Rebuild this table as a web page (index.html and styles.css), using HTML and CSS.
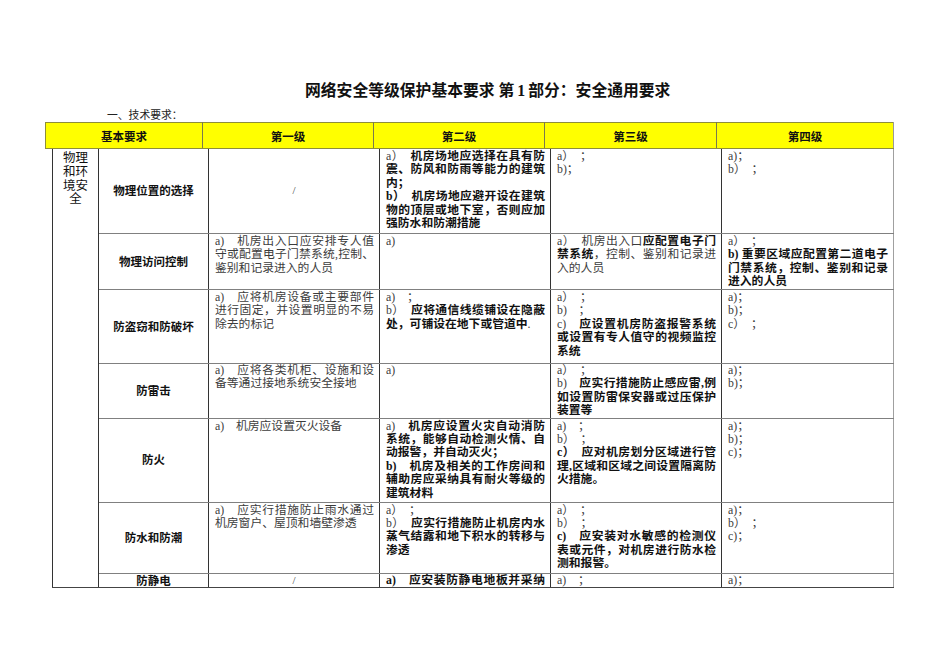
FILE: index.html
```html
<!DOCTYPE html>
<html lang="zh-CN">
<head>
<meta charset="utf-8">
<title>网络安全等级保护基本要求</title>
<link rel="stylesheet" href="styles.css">
</head>
<body>
<div class="page">
  <h1 class="title">网络安全等级保护基本要求 第<span class="num">1</span>部分：安全通用要求</h1>
  <p class="sub">一、技术要求：</p>

  <table class="head">
    <colgroup><col class="h1"><col class="h2"><col class="h3"><col class="h4"><col class="h5"></colgroup>
    <tr><th>基本要求</th><th>第一级</th><th>第二级</th><th>第三级</th><th>第四级</th></tr>
  </table>

  <table class="body">
    <colgroup><col class="b1"><col class="b2"><col class="b3"><col class="b4"><col class="b5"><col class="b6"></colgroup>
    <tr class="r1">
      <td class="cat" rowspan="7"><span class="cl">物理</span><span class="cl">和环</span><span class="cl">境安</span><span class="cl">全</span></td>
      <td class="lab">物理位置的选择</td>
      <td class="slash">/</td>
      <td class="c">
        <span class="l j"><span class="r">a）</span><span class="b">　机房场地应选择在具有防</span></span>
        <span class="l j b">震、防风和防雨等能力的建筑</span>
        <span class="l b">内；</span>
        <span class="l j b">b）　机房场地应避开设在建筑</span>
        <span class="l j b">物的顶层或地下室，否则应加</span>
        <span class="l b">强防水和防潮措施</span>
      </td>
      <td class="c"><span class="l r">a）　；</span><span class="l r">b)；</span></td>
      <td class="c"><span class="l r">a)；</span><span class="l r">b）　；</span></td>
    </tr>
    <tr class="r2">
      <td class="lab">物理访问控制</td>
      <td class="c">
        <span class="l j r">a)　机房出入口应安排专人值</span>
        <span class="l j r">守或配置电子门禁系统,控制、</span>
        <span class="l r">鉴别和记录进入的人员</span>
      </td>
      <td class="c"><span class="l r">a)</span></td>
      <td class="c">
        <span class="l j"><span class="r">a）　机房出入口</span><span class="b">应配置电子门</span></span>
        <span class="l j"><span class="b">禁系统</span><span class="r">，控制、鉴别和记录进</span></span>
        <span class="l r">入的人员</span>
      </td>
      <td class="c">
        <span class="l r">a）　；</span>
        <span class="l j b">b) 重要区域应配置第二道电子</span>
        <span class="l j b">门禁系统，控制、鉴别和记录</span>
        <span class="l b">进入的人员</span>
      </td>
    </tr>
    <tr class="r3">
      <td class="lab">防盗窃和防破坏</td>
      <td class="c">
        <span class="l j r">a)　应将机房设备或主要部件</span>
        <span class="l j r">进行固定，并设置明显的不易</span>
        <span class="l r">除去的标记</span>
      </td>
      <td class="c">
        <span class="l r">a)　；</span>
        <span class="l j"><span class="r">b）</span><span class="b">　应将通信线缆铺设在隐蔽</span></span>
        <span class="l"><span class="b">处，可铺设在地下或管道中</span><span class="r">.</span></span>
      </td>
      <td class="c">
        <span class="l r">a）　；</span>
        <span class="l r">b)　；</span>
        <span class="l j"><span class="r">c)</span><span class="b">　应设置机房防盗报警系统</span></span>
        <span class="l j b">或设置有专人值守的视频监控</span>
        <span class="l b">系统</span>
      </td>
      <td class="c"><span class="l r">a)；</span><span class="l r">b)；</span><span class="l r">c）　；</span></td>
    </tr>
    <tr class="r4">
      <td class="lab">防雷击</td>
      <td class="c">
        <span class="l j r">a)　应将各类机柜、设施和设</span>
        <span class="l r">备等通过接地系统安全接地</span>
      </td>
      <td class="c"><span class="l r">a)</span></td>
      <td class="c">
        <span class="l r">a）　；</span>
        <span class="l j"><span class="r">b)</span><span class="b">　应实行措施防止感应雷,例</span></span>
        <span class="l j b">如设置防雷保安器或过压保护</span>
        <span class="l b">装置等</span>
      </td>
      <td class="c"><span class="l r">a)；</span><span class="l r">b)；</span></td>
    </tr>
    <tr class="r5">
      <td class="lab">防火</td>
      <td class="c"><span class="l r">a)　机房应设置灭火设备</span></td>
      <td class="c">
        <span class="l j"><span class="r">a)</span><span class="b">　机房应设置火灾自动消防</span></span>
        <span class="l j b">系统，能够自动检测火情、自</span>
        <span class="l b">动报警，并自动灭火；</span>
        <span class="l j b">b)　机房及相关的工作房间和</span>
        <span class="l j b">辅助房应采纳具有耐火等级的</span>
        <span class="l b">建筑材料</span>
      </td>
      <td class="c">
        <span class="l r">a)　；</span>
        <span class="l r">b）　；</span>
        <span class="l j b">c）　应对机房划分区域进行管</span>
        <span class="l j b">理,区域和区域之间设置隔离防</span>
        <span class="l b">火措施。</span>
      </td>
      <td class="c"><span class="l r">a)；</span><span class="l r">b)；</span><span class="l r">c)；</span></td>
    </tr>
    <tr class="r6">
      <td class="lab">防水和防潮</td>
      <td class="c">
        <span class="l j r">a)　应实行措施防止雨水通过</span>
        <span class="l r">机房窗户、屋顶和墙壁渗透</span>
      </td>
      <td class="c">
        <span class="l r">a）　；</span>
        <span class="l j"><span class="r">b）</span><span class="b">　应实行措施防止机房内水</span></span>
        <span class="l j b">蒸气结露和地下积水的转移与</span>
        <span class="l b">渗透</span>
      </td>
      <td class="c">
        <span class="l r">a）　；</span>
        <span class="l r">b）　；</span>
        <span class="l j b">c)　应安装对水敏感的检测仪</span>
        <span class="l j b">表或元件，对机房进行防水检</span>
        <span class="l b">测和报警。</span>
      </td>
      <td class="c"><span class="l r">a)；</span><span class="l r">b）　；</span><span class="l r">c)；</span></td>
    </tr>
    <tr class="r7">
      <td class="lab">防静电</td>
      <td class="slash">/</td>
      <td class="c"><span class="l j b">a)　应安装防静电地板并采纳</span></td>
      <td class="c"><span class="l r">a)　；</span></td>
      <td class="c"><span class="l r">a)；</span></td>
    </tr>
  </table>
</div>
</body>
</html>
```
FILE: styles.css
```css
html, body {
  margin: 0;
  padding: 0;
  background: #ffffff;
}

.page {
  padding-top: 81px;
  font-family: "Liberation Serif", "Noto Sans CJK SC", serif;
  color: #111;
}

.title {
  margin: 0 0 0 305px;
  font-size: 15.8px;
  line-height: 20px;
  font-weight: 700;
  color: #111;
  white-space: nowrap;
}

.title .num {
  padding: 0 3px;
}

.sub {
  margin: 0 0 0 107px;
  padding-top: 8px;
  font-size: 10.8px;
  line-height: 13px;
  color: #222;
}

table {
  border-collapse: collapse;
  table-layout: fixed;
}

/* header */
.head {
  margin-left: 45px;
  width: 848px;
  background: #ffff00;
}
.head col.h1 { width: 157px; }
.head col.h2 { width: 171px; }
.head col.h3 { width: 171px; }
.head col.h4 { width: 172px; }
.head col.h5 { width: 177px; }

.head th {
  height: 25px;
  padding: 0;
  border-top: 1px solid #8e8e3a;
  border-bottom: 1px solid #8e8e3a;
  border-left: 1px solid #7a7a50;
  border-right: 1px solid #7a7a50;
  font-family: "Noto Sans CJK SC", sans-serif;
  font-size: 11.5px;
  font-weight: 700;
  color: #111;
  text-align: center;
  vertical-align: middle;
}
.head th:first-child { border-left-color: #8e8e3a; }
.head th:last-child { border-right-color: #999; }

/* body */
.body {
  margin-left: 52px;
  width: 841px;
}
.body col.b1 { width: 46px; }
.body col.b2 { width: 110px; }
.body col.b3 { width: 171px; }
.body col.b4 { width: 171px; }
.body col.b5 { width: 171px; }
.body col.b6 { width: 172px; }

.body td {
  padding: 0;
  border-left: 1px solid #333;
  border-right: 1px solid #333;
  border-top: 1px solid #808080;
  border-bottom: 1px solid #808080;
  font-size: 11.8px;
  line-height: 13.4px;
}
.body tr:first-child td { border-top: none; }
.body td:last-child { border-right-color: #a0a0a0; }
.body tr.r7 td { border-bottom-color: #444; }

.r1 td { height: 83px; }
.r2 td { height: 54px; }
.r3 td { height: 72px; }
.r4 td { height: 53px; }
.r5 td { height: 82px; }
.r6 td { height: 69px; }
.r7 td { height: 13px; }

.body td.cat {
  vertical-align: top;
  text-align: center;
  padding-top: 3px;
  font-family: "Liberation Serif", "Noto Sans CJK SC", sans-serif;
  font-size: 12.5px;
  line-height: 13.8px;
  color: #111;
  border-bottom-color: #444;
}

.cl {
  display: block;
  height: 13.8px;
}

.body td.lab {
  text-align: center;
  vertical-align: middle;
  font-family: "Noto Sans CJK SC", sans-serif;
  font-size: 11.5px;
  font-weight: 700;
  color: #111;
}

.body td.slash {
  text-align: center;
  vertical-align: middle;
  font-family: "Liberation Serif", serif;
  font-size: 11px;
  color: #444;
}

.body td.c {
  vertical-align: top;
  padding: 1px 5px 0 6px;
}

.r4 td.c {
  padding-top: 0;
}

.r7 td.c {
  padding-top: 0;
  line-height: 13px;
}

.l {
  display: block;
  text-align: left;
}
.j {
  text-align: justify;
  text-align-last: justify;
}

.b {
  font-weight: 700;
  color: #111;
}
.r {
  font-weight: 400;
  color: #3c3c3c;
}
```
